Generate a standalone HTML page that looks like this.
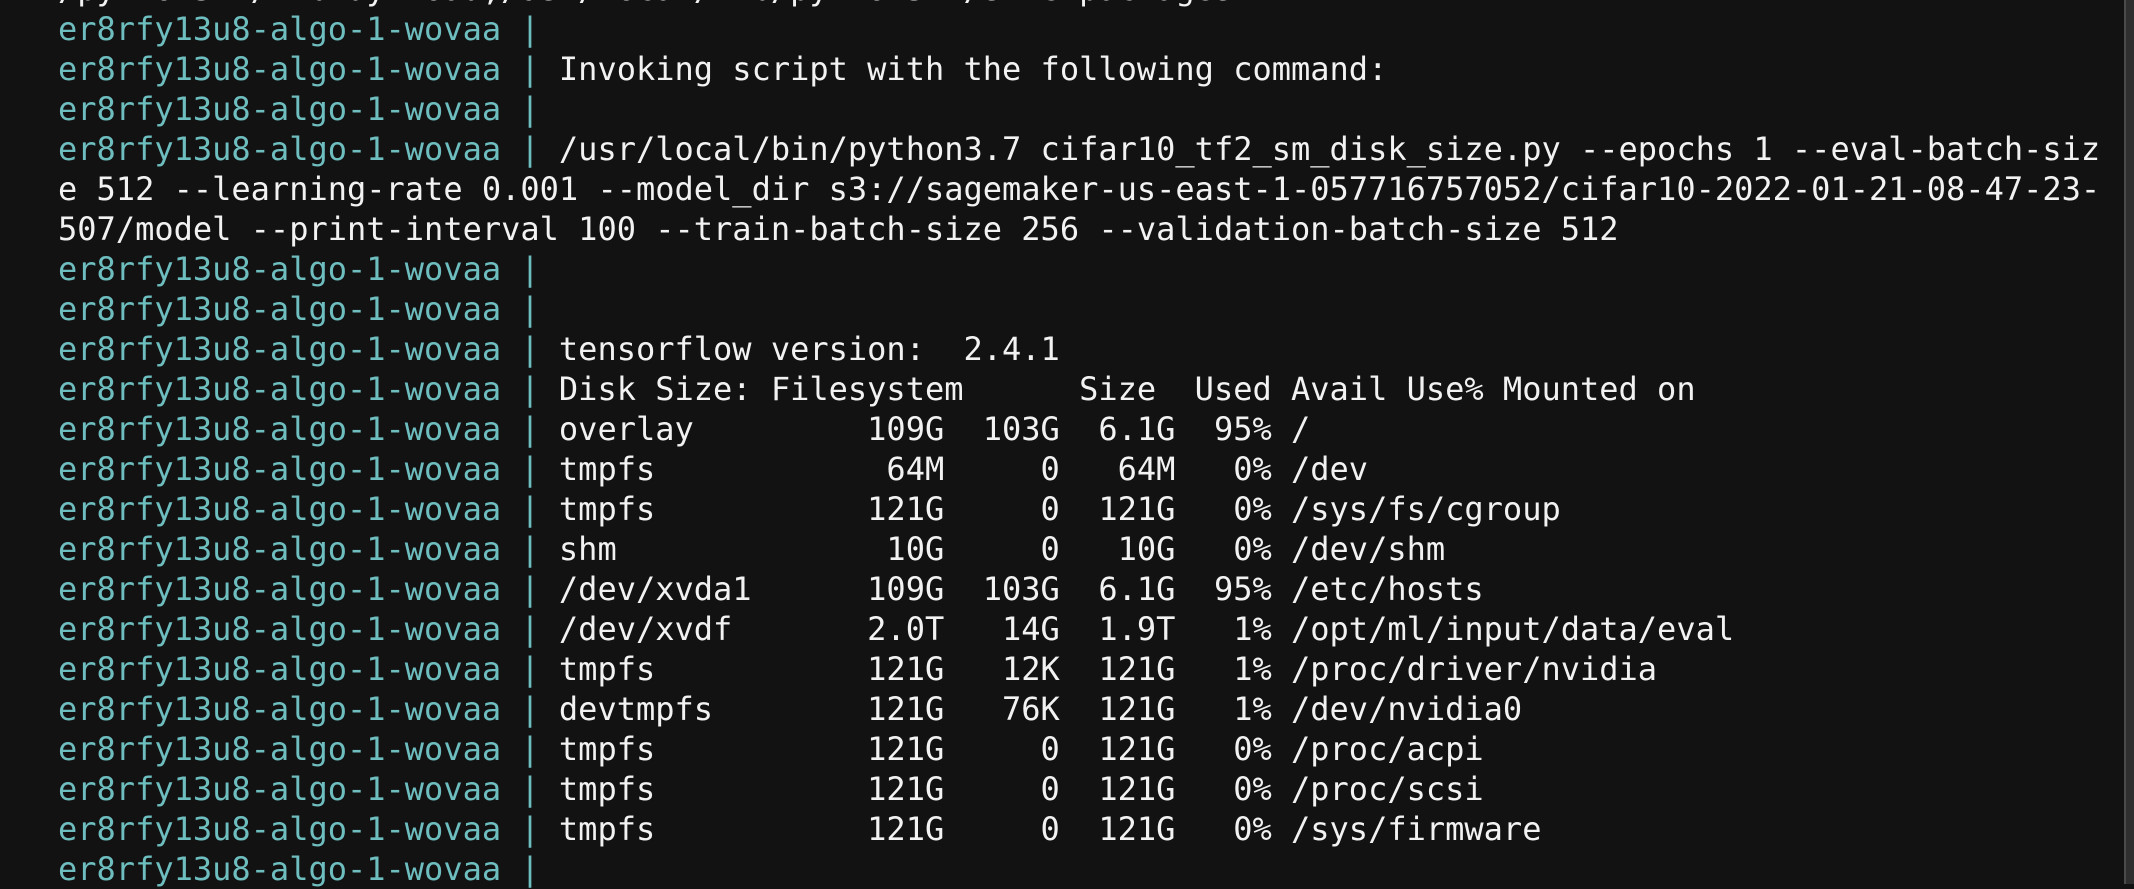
<!DOCTYPE html>
<html><head><meta charset="utf-8"><style>
html,body{margin:0;padding:0;background:#121212;width:2134px;height:884px;overflow:hidden;}
.r{position:absolute;top:0;right:0;width:8px;height:884px;background:#2f2f2f;border-left:2px solid #4a4a4a;}
pre{position:absolute;left:58px;top:-31px;margin:0;font-family:"DejaVu Sans Mono","Liberation Mono",monospace;font-size:32px;line-height:40px;color:#f2f2f2;white-space:pre;}
.c{color:#6ebdbf;}
</style></head><body>
<pre>/python3.7/lib-dynload,/usr/local/lib/python3.7/site-packages
<span class="c">er8rfy13u8-algo-1-wovaa |</span>
<span class="c">er8rfy13u8-algo-1-wovaa |</span> Invoking script with the following command:
<span class="c">er8rfy13u8-algo-1-wovaa |</span>
<span class="c">er8rfy13u8-algo-1-wovaa |</span> /usr/local/bin/python3.7 cifar10_tf2_sm_disk_size.py --epochs 1 --eval-batch-siz
e 512 --learning-rate 0.001 --model_dir s3://sagemaker-us-east-1-057716757052/cifar10-2022-01-21-08-47-23-
507/model --print-interval 100 --train-batch-size 256 --validation-batch-size 512
<span class="c">er8rfy13u8-algo-1-wovaa |</span>
<span class="c">er8rfy13u8-algo-1-wovaa |</span>
<span class="c">er8rfy13u8-algo-1-wovaa |</span> tensorflow version:  2.4.1
<span class="c">er8rfy13u8-algo-1-wovaa |</span> Disk Size: Filesystem      Size  Used Avail Use% Mounted on
<span class="c">er8rfy13u8-algo-1-wovaa |</span> overlay         109G  103G  6.1G  95% /
<span class="c">er8rfy13u8-algo-1-wovaa |</span> tmpfs            64M     0   64M   0% /dev
<span class="c">er8rfy13u8-algo-1-wovaa |</span> tmpfs           121G     0  121G   0% /sys/fs/cgroup
<span class="c">er8rfy13u8-algo-1-wovaa |</span> shm              10G     0   10G   0% /dev/shm
<span class="c">er8rfy13u8-algo-1-wovaa |</span> /dev/xvda1      109G  103G  6.1G  95% /etc/hosts
<span class="c">er8rfy13u8-algo-1-wovaa |</span> /dev/xvdf       2.0T   14G  1.9T   1% /opt/ml/input/data/eval
<span class="c">er8rfy13u8-algo-1-wovaa |</span> tmpfs           121G   12K  121G   1% /proc/driver/nvidia
<span class="c">er8rfy13u8-algo-1-wovaa |</span> devtmpfs        121G   76K  121G   1% /dev/nvidia0
<span class="c">er8rfy13u8-algo-1-wovaa |</span> tmpfs           121G     0  121G   0% /proc/acpi
<span class="c">er8rfy13u8-algo-1-wovaa |</span> tmpfs           121G     0  121G   0% /proc/scsi
<span class="c">er8rfy13u8-algo-1-wovaa |</span> tmpfs           121G     0  121G   0% /sys/firmware
<span class="c">er8rfy13u8-algo-1-wovaa |</span></pre>
<div class="r"></div>
</body></html>
